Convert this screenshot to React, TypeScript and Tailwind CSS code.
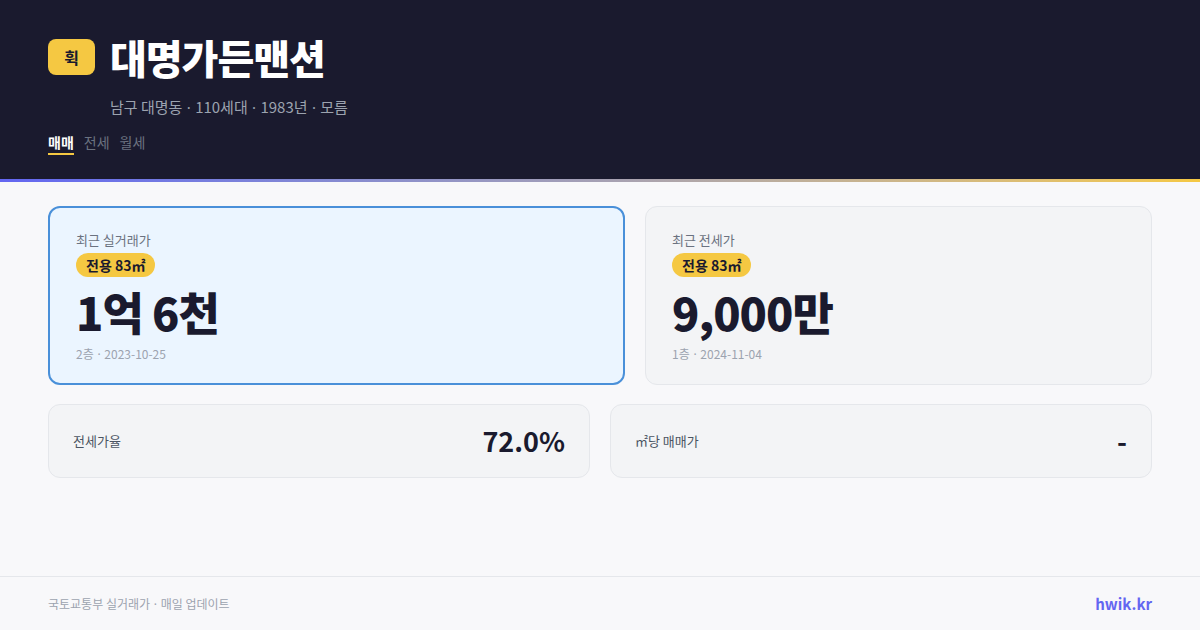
const font = { fontFamily: '"Noto Sans CJK KR", "Noto Sans", sans-serif' };

// latin middle dot (the CJK one is full width)
function Dot() {
  return <span className="mx-[1px] font-['Noto_Sans']">·</span>;
}

function PriceCard({
  label,
  value,
  floor,
  date,
  active,
}: {
  label: string;
  value: string;
  floor: string;
  date: string;
  active?: boolean;
}) {
  return (
    <div
      className={
        active
          ? "h-[179px] rounded-xl border-2 border-[#4a90d9] bg-[#ebf5ff] px-[26px] pt-[22px]"
          : "h-[179px] rounded-xl border border-[#e5e7eb] bg-[#f3f4f6] px-[26px] pt-[23px]"
      }
    >
      <div className="text-[13px] leading-[20px] text-[#6b7280]">{label}</div>
      <div className="mt-[3px] inline-flex h-[24px] items-center rounded-full bg-[#f5c842] px-[10px] text-[14px] font-bold text-[#1a1a2e]">
        전용 83㎡
      </div>
      <div className="mt-[10px] text-[45px] font-black leading-[50px] tracking-[-1px] text-[#1a1a2e]">
        {value}
      </div>
      <div className="mt-[8px] text-[12px] leading-[18px] text-[#9ca3af]">
        {floor} <Dot /> {date}
      </div>
    </div>
  );
}

function StatCard({ label, value }: { label: string; value: string }) {
  return (
    <div className="flex h-[74px] items-center justify-between rounded-xl border border-[#e5e7eb] bg-[#f3f4f6] px-[24px]">
      <span className="text-[13px] text-[#4b5563]">{label}</span>
      <span className="text-[27px] font-bold text-[#1a1a2e]">{value}</span>
    </div>
  );
}

export default function App() {
  return (
    <div style={font} className="flex h-[630px] w-[1200px] flex-col overflow-hidden bg-[#f8f8fa]">
      {/* Header */}
      <header className="h-[179px] bg-[#1a1a2e] px-[48px] pt-[37px]">
        <div className="flex items-center gap-[15px]">
          <div className="flex h-[36px] w-[47px] items-center justify-center rounded-lg bg-[#f5c842] text-[16px] font-bold text-[#1a1a2e]">
            휙
          </div>
          <h1 className="text-[40px] font-black leading-[40px] tracking-[-1px] text-white">대명가든맨션</h1>
        </div>
        <div className="mt-[20px] pl-[62px] text-[15px] leading-[20px] text-[#9ca3af]">
          남구 대명동 <Dot /> 110세대 <Dot /> 1983년 <Dot /> 모름
        </div>
        <div className="mt-[16px] flex gap-[10px] text-[14px] leading-[18px]">
          <span className="border-b-2 border-[#f5c842] pb-[2px] font-bold text-white">매매</span>
          <span className="text-[#6b7280]">전세</span>
          <span className="text-[#6b7280]">월세</span>
        </div>
      </header>
      <div className="h-[3px] bg-gradient-to-r from-[#6366f1] to-[#f5c842]" />

      {/* Content */}
      <main className="flex-1 px-[48px] pt-[24px]">
        <div className="grid grid-cols-[577px_507px] gap-[20px]">
          <PriceCard label="최근 실거래가" value="1억 6천" floor="2층" date="2023-10-25" active />
          <PriceCard label="최근 전세가" value="9,000만" floor="1층" date="2024-11-04" />
        </div>
        <div className="mt-[19px] grid grid-cols-2 gap-[20px]">
          <StatCard label="전세가율" value="72.0%" />
          <StatCard label="㎡당 매매가" value="-" />
        </div>
      </main>

      {/* Footer */}
      <footer className="flex h-[54px] items-center justify-between border-t border-[#e5e7eb] px-[48px] pt-[2px]">
        <span className="text-[12px] text-[#9ca3af]">
          국토교통부 실거래가 <Dot /> 매일 업데이트
        </span>
        <span className="text-[15px] font-bold text-[#6366f1]">hwik.kr</span>
      </footer>
    </div>
  );
}
